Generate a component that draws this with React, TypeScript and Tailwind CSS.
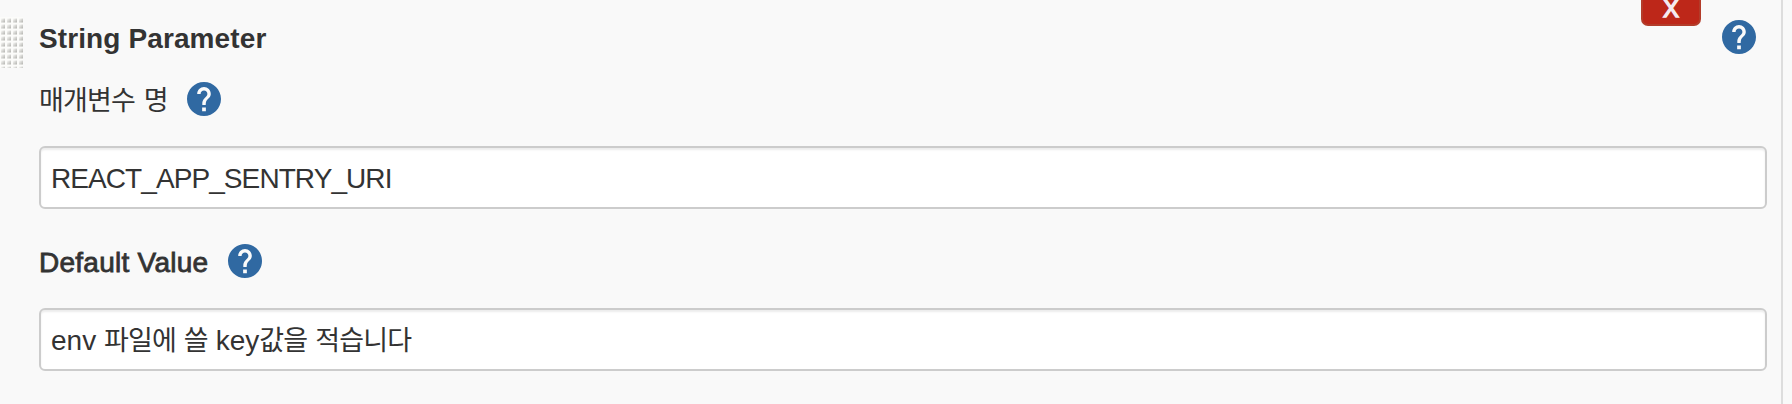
import type { ReactNode } from "react";

function HelpIcon() {
  return (
    <svg viewBox="2 2 20 20" className="block size-[34px] shrink-0 fill-[#3069a2]">
      <circle cx="12" cy="12" r="8" className="fill-[#fafafa]" />
      <path d="M12 2C6.48 2 2 6.48 2 12s4.48 10 10 10 10-4.48 10-10S17.52 2 12 2zm1.1 17.2h-2.2v-2.2h2.2v2.2zm1.97-7.95l-.9.92C13.45 12.9 13 13.6 13 15.6h-2v-1.1c0-1.1.45-2.1 1.17-2.83l1.24-1.26c.37-.36.59-.86.59-1.41 0-1.1-.9-2-2-2s-2 .9-2 2H8c0-2.21 1.79-4 4-4s4 1.79 4 4c0 .88-.36 1.68-.93 2.25z" />
    </svg>
  );
}

function DragHandle() {
  return (
    <svg width="23" height="51" className="mt-[17px] block shrink-0">
      <defs>
        <linearGradient id="dot" x1="0" y1="0" x2="1" y2="1">
          <stop offset="0.1" stopColor="#f4f4f2" />
          <stop offset="0.9" stopColor="#b8b8b4" />
        </linearGradient>
        <pattern id="grip" width="6" height="6" patternUnits="userSpaceOnUse">
          <rect width="6" height="6" fill="#fcfcfa" />
          <rect x="1" y="1.5" width="4" height="4" fill="url(#dot)" />
        </pattern>
      </defs>
      <rect width="23" height="51" fill="url(#grip)" />
    </svg>
  );
}

function Field({ children }: { children: ReactNode }) {
  return (
    <div
      role="textbox"
      className="h-[63px] w-[1728px] rounded-[6px] border-2 border-[#cccccc] bg-white px-[10px] text-[28px] leading-[61px] whitespace-pre shadow-[inset_0_2px_2px_rgba(0,0,0,0.075)]"
    >
      {children}
    </div>
  );
}

function Ko({ children }: { children: ReactNode }) {
  return (
    <span className="font-['Noto_Sans_CJK_KR',sans-serif] text-[27px] leading-none tracking-[-0.8px]">
      {children}
    </span>
  );
}

export default function App() {
  return (
    <div className="flex h-[404px] w-[1792px] overflow-hidden bg-[#f9f9f9] font-['Liberation_Sans','Noto_Sans_CJK_KR',sans-serif] text-[28px] text-[#333333]">
      <div className="flex w-[1783px] border-r-2 border-[#dddddd]">
        <DragHandle />
        <div className="ml-4 w-[1728px] shrink-0">
          <div className="flex h-[82px] items-start">
            <h2 className="mt-[23px] text-[28px] leading-8 font-bold tracking-[0.11px] whitespace-nowrap">String Parameter</h2>
            <button className="ml-auto flex h-[26px] w-[60px] items-start justify-center rounded-b-[7px] border-2 border-t-0 border-[#b33c2a] bg-[#bd2719] text-[24px] leading-[17px] text-[#f5eaf0]">
              <span className="[-webkit-text-stroke:1.4px]">X</span>
            </button>
            <div className="mt-5 mr-[11px] ml-[21px]"><HelpIcon /></div>
          </div>
          <div className="flex h-16 items-start">
            <label className="w-[148px] pt-[2px] text-[27px] leading-[34px] tracking-[-0.84px] whitespace-nowrap [word-spacing:2px]">매개변수 명</label>
            <HelpIcon />
          </div>
          <Field><span className="tracking-[-0.92px]">REACT_APP_SENTRY_URI</span></Field>
          <div className="mt-[35px] flex h-16 items-start">
            <label className="w-[189px] pt-[2px] text-[28px] leading-[34px] tracking-[0.26px] whitespace-nowrap [-webkit-text-stroke:0.8px]">Default Value</label>
            <HelpIcon />
          </div>
          <Field>
            env <Ko>파일에</Ko> <Ko>쓸</Ko> key<Ko>값을</Ko> <Ko>적습니다</Ko>
          </Field>
        </div>
      </div>
    </div>
  );
}
